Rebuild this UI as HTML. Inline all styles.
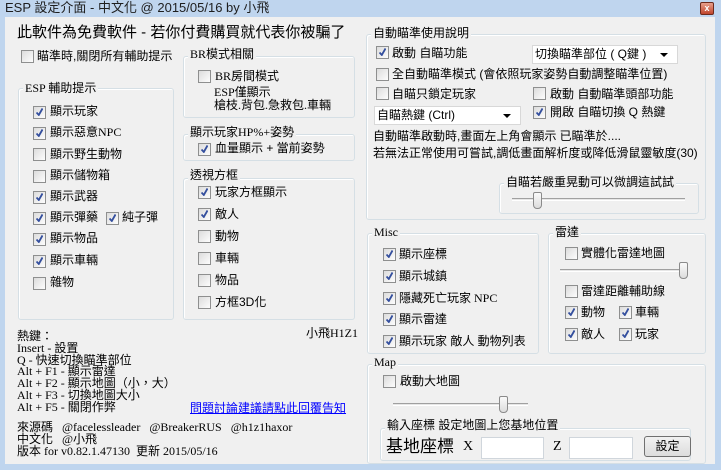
<!DOCTYPE html>
<html><head><meta charset="utf-8"><style>
*{margin:0;padding:0;box-sizing:border-box}
body{width:721px;height:470px;background:#bfd5ee;position:relative;overflow:hidden;font-family:"Liberation Sans","Noto Sans CJK TC",sans-serif;font-size:12px;color:#000}
.a{position:absolute;white-space:nowrap;line-height:14px}
#title{left:5px;top:0;font-size:13px;line-height:16px;color:#1e1e1e}
#client{position:absolute;left:5px;top:17px;width:710px;height:447px;background:#f0f0f0}
.g{position:absolute;border:1px solid #d5dfe5;border-radius:3px;box-shadow:inset 1px 1px 0 #fff}
.gt{position:absolute;background:#f0f0f0;padding:0 2px;line-height:14px;white-space:nowrap}
.cb{position:absolute;width:13px;height:13px;border:1px solid #8e8f8f;background:linear-gradient(135deg,#dcdcdc,#fdfdfd);}
.cb.c::after{content:"";position:absolute;left:2px;top:1px;width:7px;height:8px;background:no-repeat center/contain url("data:image/svg+xml,%3Csvg xmlns='http://www.w3.org/2000/svg' viewBox='0 0 7 8'%3E%3Cpath d='M0.5 4.5 L2.8 7 L6.5 0.5' stroke='%23344f9e' stroke-width='1.8' fill='none'/%3E%3C/svg%3E")}
.dd{position:absolute;background:#fff;border:1px solid #d8d8d8;line-height:16px;padding-left:2px}
.dd::after{content:"";position:absolute;right:9px;top:7px;border-left:4px solid transparent;border-right:4px solid transparent;border-top:4px solid #000}
.tr{position:absolute;height:3px;border-top:1px solid #a0a0a0;border-bottom:1px solid #fff;background:#e6e6e6}
.th{position:absolute;width:9px;height:17px;border:1px solid #8a8a8a;border-radius:2px 2px 4px 4px;background:linear-gradient(#fafafa,#dcdcdc)}
.serif{font-family:"Liberation Serif","Noto Sans CJK TC",serif}
.inp{position:absolute;background:#fff;border:1px solid #d0d6dc}
</style></head><body>
<div class="a" id="title">ESP 設定介面 - 中文化 @ 2015/05/16 by 小飛</div>
<div style="position:absolute;left:700px;top:2px;width:14px;height:13px;background:linear-gradient(#e8a08c,#c0452c);border:1px solid #6d2a1c;border-radius:2px;color:#fff;font-size:9px;line-height:11px;text-align:center;font-weight:bold">x</div>
<div id="client"></div>

<div class="a" style="left:17px;top:24px;font-size:15px;line-height:17px">此軟件為免費軟件 - 若你付費購買就代表你被騙了</div>
<div class="cb" style="left:21px;top:50px"></div><div class="a" style="left:37px;top:49px">瞄準時,關閉所有輔助提示</div>

<div class="g" style="left:18px;top:88px;width:156px;height:232px"></div>
<div class="gt serif" style="left:23px;top:81px">ESP 輔助提示</div>
<div class="cb c" style="left:33px;top:106px"></div><div class="a" style="left:50px;top:104px">顯示玩家</div>
<div class="cb c" style="left:33px;top:127px"></div><div class="a serif" style="left:50px;top:125px">顯示惡意NPC</div>
<div class="cb" style="left:33px;top:148px"></div><div class="a" style="left:50px;top:147px">顯示野生動物</div>
<div class="cb" style="left:33px;top:170px"></div><div class="a" style="left:50px;top:168px">顯示儲物箱</div>
<div class="cb c" style="left:33px;top:191px"></div><div class="a" style="left:50px;top:189px">顯示武器</div>
<div class="cb c" style="left:33px;top:212px"></div><div class="a" style="left:50px;top:210px">顯示彈藥</div>
<div class="cb c" style="left:106px;top:212px"></div><div class="a" style="left:122px;top:210px">純子彈</div>
<div class="cb c" style="left:33px;top:233px"></div><div class="a" style="left:50px;top:231px">顯示物品</div>
<div class="cb c" style="left:33px;top:255px"></div><div class="a" style="left:50px;top:253px">顯示車輛</div>
<div class="cb" style="left:33px;top:277px"></div><div class="a" style="left:50px;top:275px">雜物</div>

<div class="g" style="left:183px;top:56px;width:172px;height:62px"></div>
<div class="gt serif" style="left:188px;top:47px">BR模式相關</div>
<div class="cb" style="left:198px;top:70px"></div><div class="a serif" style="left:215px;top:69px">BR房間模式</div>
<div class="a serif" style="left:214px;top:86px;line-height:13px">ESP僅顯示<br>槍枝.背包.急救包.車輛</div>

<div class="g" style="left:183px;top:134px;width:172px;height:27px"></div>
<div class="gt serif" style="left:188px;top:125px">顯示玩家HP%+姿勢</div>
<div class="cb c" style="left:198px;top:143px"></div><div class="a" style="left:215px;top:141px">血量顯示 + 當前姿勢</div>

<div class="g" style="left:183px;top:178px;width:172px;height:142px"></div>
<div class="gt" style="left:188px;top:168px">透視方框</div>
<div class="cb c" style="left:198px;top:186px"></div><div class="a" style="left:215px;top:185px">玩家方框顯示</div>
<div class="cb c" style="left:198px;top:208px"></div><div class="a" style="left:215px;top:207px">敵人</div>
<div class="cb" style="left:198px;top:230px"></div><div class="a" style="left:215px;top:229px">動物</div>
<div class="cb" style="left:198px;top:252px"></div><div class="a" style="left:215px;top:251px">車輛</div>
<div class="cb" style="left:198px;top:274px"></div><div class="a" style="left:215px;top:273px">物品</div>
<div class="cb" style="left:198px;top:296px"></div><div class="a" style="left:215px;top:295px">方框3D化</div>

<div class="a serif" style="left:306px;top:326px">小飛H1Z1</div>
<div class="a serif" style="left:17px;top:331px;line-height:11.8px">熱鍵：<br>Insert - 設置<br>Q - 快速切換瞄準部位<br>Alt + F1 - 顯示雷達<br>Alt + F2 - 顯示地圖（小，大）<br>Alt + F3 - 切換地圖大小<br>Alt + F5 - 關閉作弊</div>
<div class="a serif" style="left:190px;top:401px;color:#0000ff;text-decoration:underline">問題討論建議請點此回覆告知</div>
<div class="a serif" style="left:17px;top:421px;line-height:12px">來源碼 &nbsp; @facelessleader &nbsp; @BreakerRUS &nbsp; @h1z1haxor<br>中文化 &nbsp; @小飛<br>版本 for v0.82.1.47130 &nbsp;更新 2015/05/16</div>

<div class="g" style="left:366px;top:34px;width:340px;height:186px"></div>
<div class="gt" style="left:371px;top:26px">自動瞄準使用說明</div>
<div class="cb c" style="left:376px;top:46px"></div><div class="a" style="left:392px;top:46px">啟動 自瞄功能</div>
<div class="dd" style="left:532px;top:45px;width:146px;height:19px">切換瞄準部位 ( Q鍵 )</div>
<div class="cb" style="left:376px;top:68px"></div><div class="a" style="left:392px;top:67px">全自動瞄準模式 (會依照玩家姿勢自動調整瞄準位置)</div>
<div class="cb" style="left:376px;top:87px"></div><div class="a" style="left:392px;top:87px">自瞄只鎖定玩家</div>
<div class="cb" style="left:533px;top:87px"></div><div class="a" style="left:550px;top:87px">啟動 自動瞄準頭部功能</div>
<div class="dd" style="left:374px;top:106px;width:147px;height:19px">自瞄熱鍵 (Ctrl)</div>
<div class="cb c" style="left:533px;top:106px"></div><div class="a" style="left:550px;top:105px">開啟 自瞄切換 Q 熱鍵</div>
<div class="a" style="left:373px;top:129px">自動瞄準啟動時,畫面左上角會顯示 已瞄準於....</div>
<div class="a" style="left:373px;top:146px">若無法正常使用可嘗試,調低畫面解析度或降低滑鼠靈敏度(30)</div>
<div class="g" style="left:499px;top:183px;width:200px;height:31px"></div>
<div class="gt" style="left:504px;top:175px">自瞄若嚴重晃動可以微調這試試</div>
<div class="tr" style="left:512px;top:198px;width:173px"></div>
<div class="th" style="left:533px;top:192px"></div>

<div class="g" style="left:367px;top:233px;width:172px;height:121px"></div>
<div class="gt serif" style="left:372px;top:225px">Misc</div>
<div class="cb c" style="left:383px;top:248px"></div><div class="a" style="left:399px;top:247px">顯示座標</div>
<div class="cb c" style="left:383px;top:270px"></div><div class="a" style="left:399px;top:269px">顯示城鎮</div>
<div class="cb c" style="left:383px;top:292px"></div><div class="a serif" style="left:399px;top:291px">隱藏死亡玩家 NPC</div>
<div class="cb c" style="left:383px;top:313px"></div><div class="a" style="left:399px;top:312px">顯示雷達</div>
<div class="cb c" style="left:383px;top:335px"></div><div class="a" style="left:399px;top:334px">顯示玩家 敵人 動物列表</div>

<div class="g" style="left:548px;top:233px;width:158px;height:121px"></div>
<div class="gt" style="left:553px;top:225px">雷達</div>
<div class="cb" style="left:565px;top:247px"></div><div class="a" style="left:581px;top:246px">實體化雷達地圖</div>
<div class="tr" style="left:560px;top:269px;width:126px"></div>
<div class="th" style="left:679px;top:262px"></div>
<div class="cb" style="left:565px;top:285px"></div><div class="a" style="left:581px;top:284px">雷達距離輔助線</div>
<div class="cb c" style="left:565px;top:306px"></div><div class="a" style="left:581px;top:305px">動物</div>
<div class="cb c" style="left:619px;top:306px"></div><div class="a" style="left:635px;top:305px">車輛</div>
<div class="cb c" style="left:565px;top:328px"></div><div class="a" style="left:581px;top:327px">敵人</div>
<div class="cb c" style="left:619px;top:328px"></div><div class="a" style="left:635px;top:327px">玩家</div>

<div class="g" style="left:367px;top:364px;width:339px;height:100px"></div>
<div class="gt serif" style="left:372px;top:355px">Map</div>
<div class="cb" style="left:383px;top:375px"></div><div class="a" style="left:400px;top:374px">啟動大地圖</div>
<div class="tr" style="left:393px;top:403px;width:135px"></div>
<div class="th" style="left:499px;top:396px"></div>
<div class="g" style="left:380px;top:428px;width:311px;height:33px"></div>
<div class="gt" style="left:385px;top:418px">輸入座標 設定地圖上您基地位置</div>
<div class="a" style="left:386px;top:438px;font-size:17px;line-height:18px">基地座標</div>
<div class="a serif" style="left:463px;top:440px;font-size:14px">X</div>
<div class="inp" style="left:481px;top:437px;width:63px;height:22px"></div>
<div class="a serif" style="left:553px;top:440px;font-size:14px">Z</div>
<div class="inp" style="left:569px;top:437px;width:64px;height:22px"></div>
<div style="position:absolute;left:644px;top:436px;width:47px;height:21px;border:1px solid #707070;border-radius:3px;background:linear-gradient(#f2f2f2,#dcdcdc);text-align:center;line-height:19px">設定</div>
</body></html>
